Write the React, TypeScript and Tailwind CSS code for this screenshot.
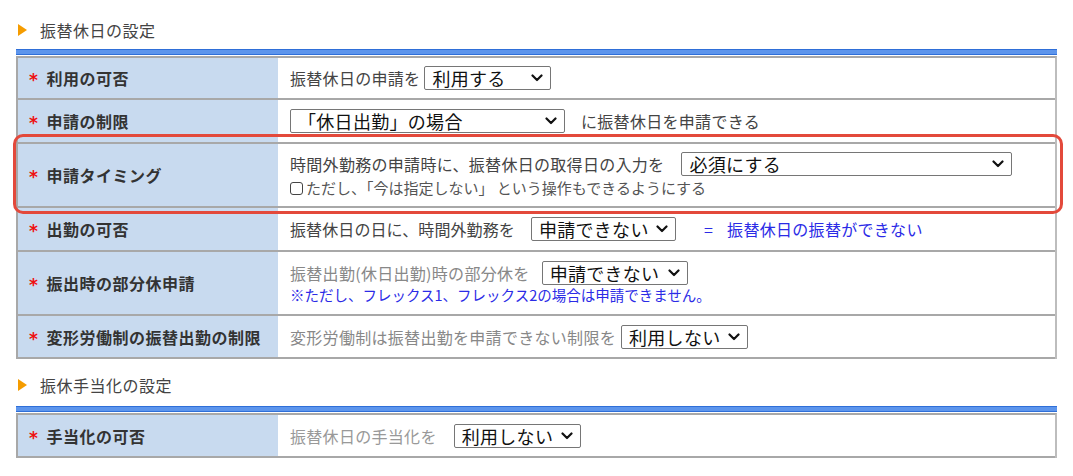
import React from 'react';

function Chevron() {
  return (
    <svg width="12" height="8" viewBox="0 0 12 8" className="shrink-0">
      <polyline points="1.5,1.5 6,6 10.5,1.5" fill="none" stroke="#111" strokeWidth="2.2" strokeLinecap="round" strokeLinejoin="round" />
    </svg>
  );
}

function Select({ value, w }: { value: string; w: string }) {
  return (
    <div className={`${w} h-[24px] inline-flex items-center justify-between border border-[#767676] rounded-[2px] bg-white pl-[7px] pr-[7px] text-[18px] leading-none text-[#111] tracking-[0.3px] shrink-0`}>
      <span>{value}</span>
      <Chevron />
    </div>
  );
}

function Row({ label, h, children }: { label: string; h: string; children: React.ReactNode }) {
  return (
    <div className={`flex ${h} border-b-2 border-[#a8a8a8]`}>
      <div className="w-[260px] shrink-0 bg-[#c8daef] flex items-center pl-[11px] text-[16px] font-bold text-[#333] tracking-[0.5px]">
        <span className="text-[#ee1111] font-['DejaVu_Sans',sans-serif] text-[17px] translate-y-[3px] mr-[8px]">*</span>
        <span>{label}</span>
      </div>
      <div className="flex-1 flex flex-col justify-center pl-[12px] text-[16px] tracking-[0.3px]">{children}</div>
    </div>
  );
}

function SectionTitle({ title }: { title: string }) {
  return (
    <div className="flex items-center h-[20px] pl-[18px]">
      <div className="w-0 h-0 border-y-[6px] border-y-transparent border-l-[9px] border-l-[#f59c00]" />
      <span className="ml-[13px] text-[16px] text-[#444] tracking-[0.5px]">{title}</span>
    </div>
  );
}

function Bar() {
  return <div className="mx-[16px] h-[6px] bg-[#5d95ec] border-y border-[#2f6fd8]" />;
}

export default function App() {
  return (
    <div className="relative w-[1073px] h-[476px] bg-white overflow-hidden font-['Noto_Sans_CJK_JP',sans-serif] leading-tight">
      <div className="pt-[20px]">
        <SectionTitle title="振替休日の設定" />
        <div className="mt-[9px]">
          <Bar />
        </div>
        <div className="mx-[16px] mt-[1px] border-t-2 border-x-2 border-[#a8a8a8] border-r-[#bdbdbd]">
          <Row label="利用の可否" h="h-[42px]">
            <div className="flex items-center text-[#444]">
              <span className="mr-[4px]">振替休日の申請を</span>
              <Select value="利用する" w="w-[127px]" />
            </div>
          </Row>
          <Row label="申請の制限" h="h-[44px]">
            <div className="flex items-center text-[#444]">
              <Select value="「休日出勤」の場合" w="w-[275px]" />
              <span className="ml-[16px]">に振替休日を申請できる</span>
            </div>
          </Row>
          <Row label="申請タイミング" h="h-[64px]">
            <div className="flex items-center text-[#444]">
              <span className="mr-[17px]">時間外勤務の申請時に、振替休日の取得日の入力を</span>
              <Select value="必須にする" w="w-[331px]" />
            </div>
            <div className="flex items-center text-[15px] text-[#555] mt-[3px] tracking-[0px]">
              <div className="w-[13px] h-[13px] border border-[#444] rounded-[3px] mr-[3px] shrink-0" />
              <span>ただし、「今は指定しない」 という操作もできるようにする</span>
            </div>
          </Row>
          <Row label="出勤の可否" h="h-[44px]">
            <div className="flex items-center text-[#444]">
              <span className="mr-[16px] tracking-[0.1px]">振替休日の日に、時間外勤務を</span>
              <Select value="申請できない" w="w-[145px]" />
              <span className="ml-[28px] text-[#2b2be6]">=</span>
              <span className="ml-[14px] text-[#2b2be6]">振替休日の振替ができない</span>
            </div>
          </Row>
          <Row label="振出時の部分休申請" h="h-[64px]">
            <div className="flex items-center text-[#888]">
              <span className="mr-[12px]">振替出勤(休日出勤)時の部分休を</span>
              <Select value="申請できない" w="w-[146px]" />
            </div>
            <div className="text-[14.5px] text-[#2b2be6] mt-[1px] tracking-[0px]">
              ※ただし、フレックス1、フレックス2の場合は申請できません。
            </div>
          </Row>
          <Row label="変形労働制の振替出勤の制限" h="h-[43px]">
            <div className="flex items-center text-[#888]">
              <span className="mr-[5px]">変形労働制は振替出勤を申請できない制限を</span>
              <Select value="利用しない" w="w-[127px]" />
            </div>
          </Row>
        </div>

        <div className="mt-[16px]">
          <SectionTitle title="振休手当化の設定" />
        </div>
        <div className="mt-[11px]">
          <Bar />
        </div>
        <div className="mx-[16px] mt-[1px] border-t-2 border-x-2 border-[#a8a8a8] border-r-[#bdbdbd]">
          <Row label="手当化の可否" h="h-[43px]">
            <div className="flex items-center text-[#999]">
              <span className="mr-[17px]">振替休日の手当化を</span>
              <Select value="利用しない" w="w-[127px]" />
            </div>
          </Row>
        </div>
      </div>

      <div className="absolute left-[13px] top-[134px] w-[1050px] h-[80px] border-[3px] border-[#e3493b] rounded-[10px] pointer-events-none" />
    </div>
  );
}
